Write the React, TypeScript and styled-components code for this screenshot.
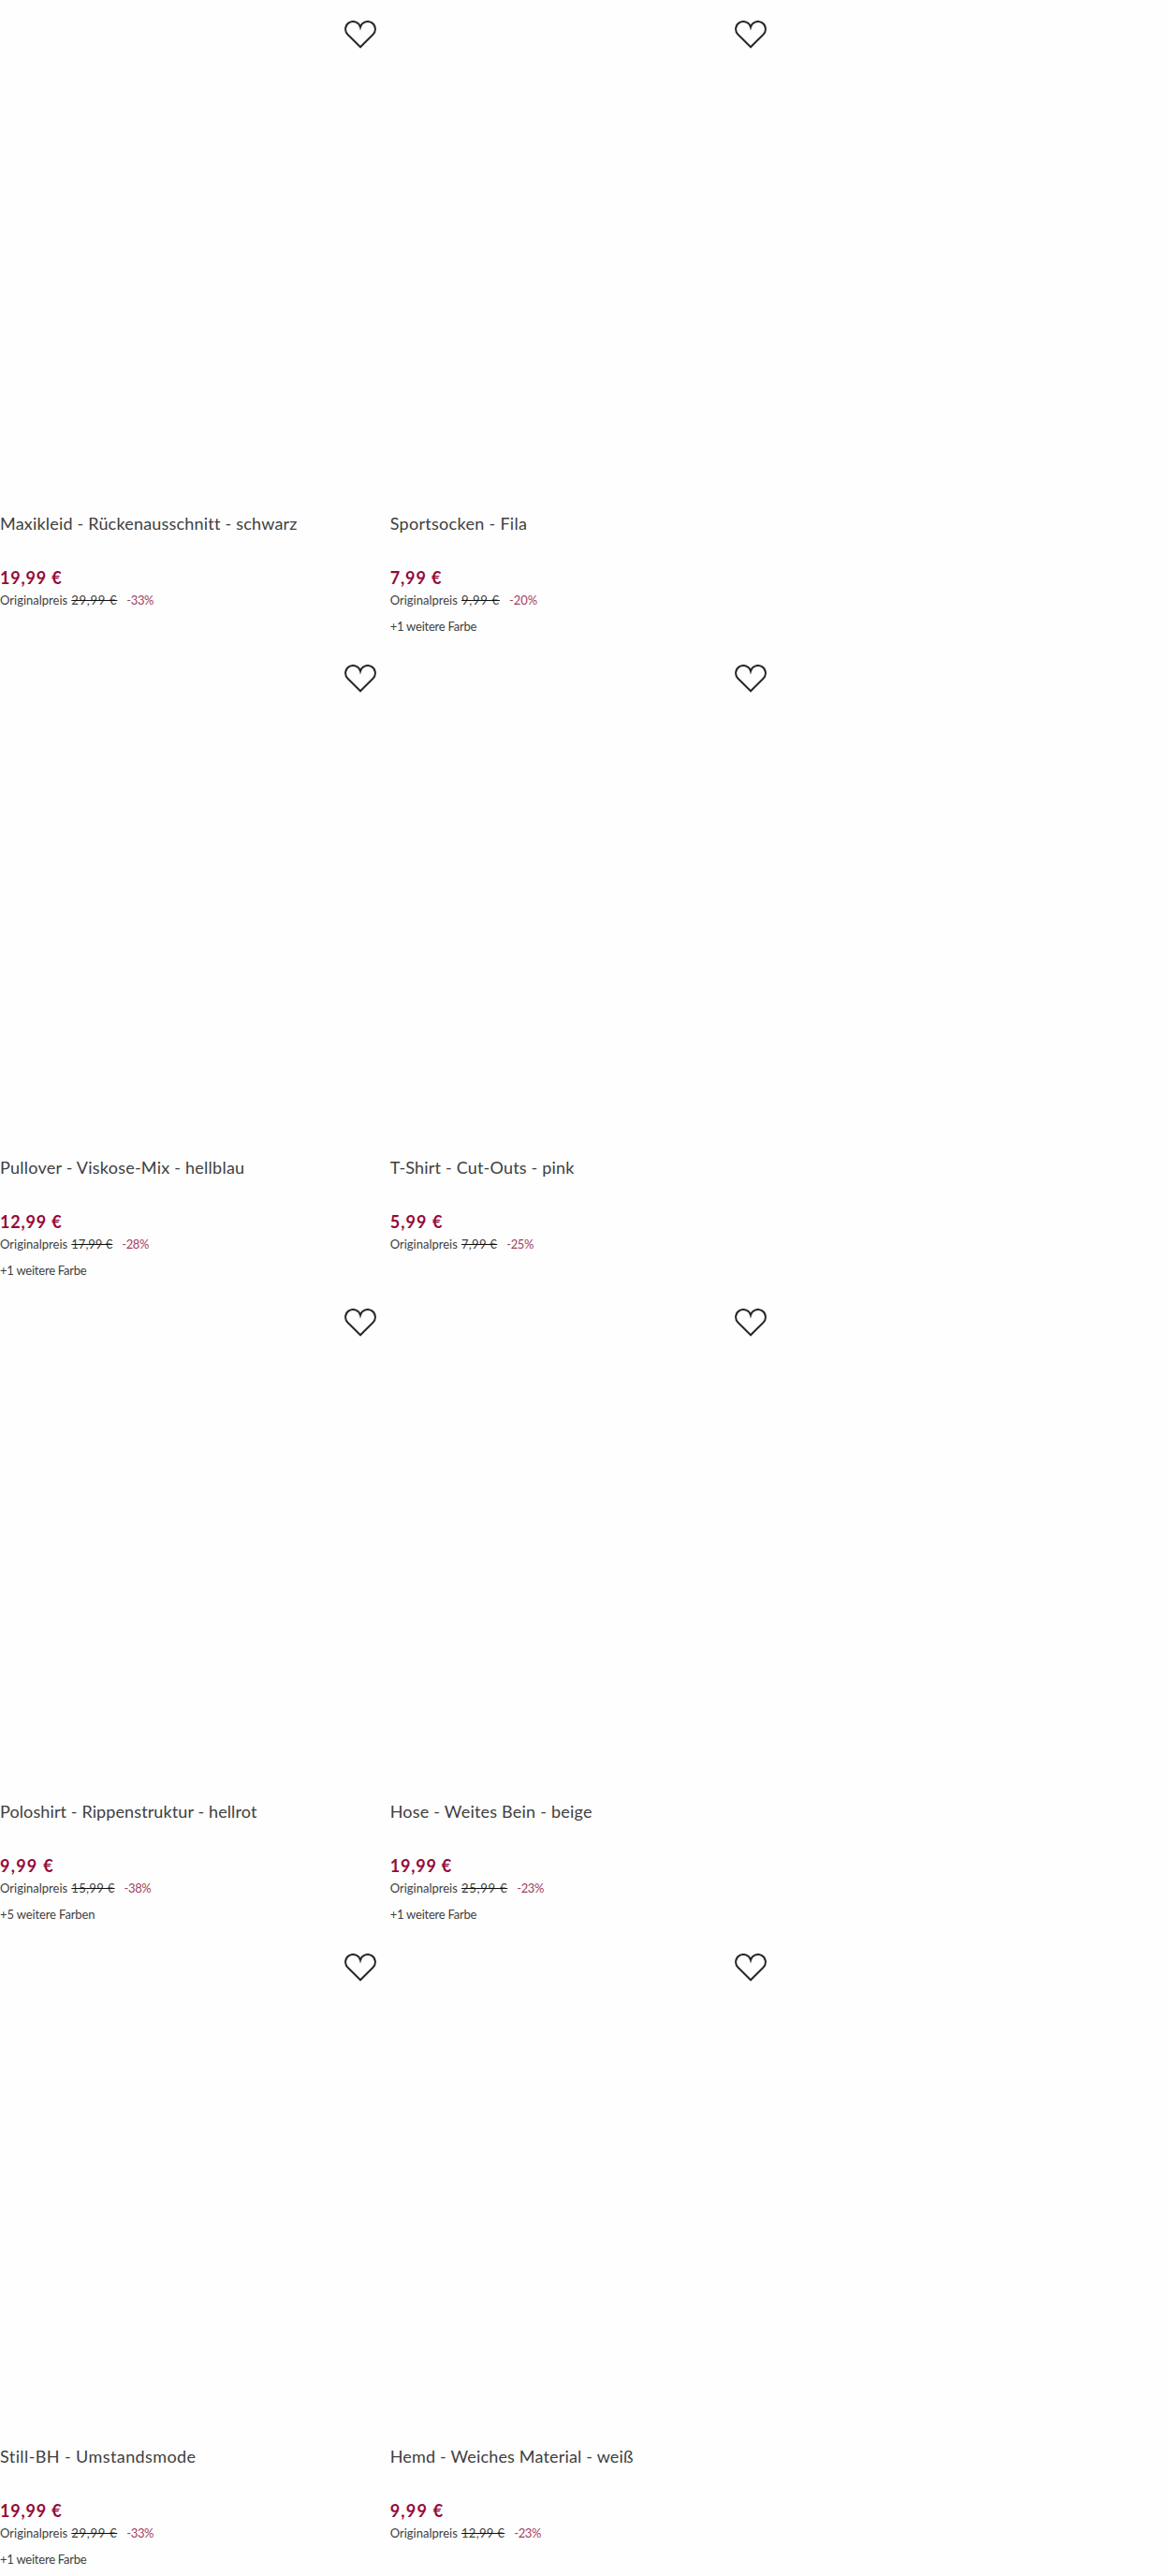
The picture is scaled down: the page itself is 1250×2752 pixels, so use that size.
import React from "react";
import styled, { createGlobalStyle } from "styled-components";

const GlobalStyle = createGlobalStyle`
  body {
    margin: 0;
    background: #fefefe;
    color: #404040;
    font-family: Lato, sans-serif;
  }
`;
const Grid = styled.div`
  display: grid;
  grid-template-columns: repeat(3, 1fr);
  grid-auto-rows: 688.2px;
  height: 2752px;
  overflow: hidden;
`;
const Card = styled.article<{ $first?: boolean }>`
  grid-column: ${(p) => (p.$first ? 1 : 2)};
  padding-right: 14.3px;
`;
const Photo = styled.div`
  position: relative;
  aspect-ratio: 3 / 4;
`;
const WishButton = styled.button`
  position: absolute;
  top: 22px;
  right: 0;
  padding: 0;
  border: 0;
  background: none;
  line-height: 0;
  cursor: pointer;
`;
const Title = styled.h3<{ $tracking: number }>`
  margin: 10.5px 0 34px;
  font-size: 18px;
  line-height: 24px;
  font-weight: 400;
  letter-spacing: ${(p) => p.$tracking}px;
  white-space: nowrap;
`;
const Price = styled.div<{ $tracking: number }>`
  font-size: 18px;
  line-height: 24px;
  font-weight: 700;
  color: #960a3a;
  letter-spacing: ${(p) => p.$tracking}px;
`;
const PriceInfo = styled.div`
  display: flex;
  margin-top: 3px;
  font-size: 13px;
  line-height: 18px;
`;
const Label = styled.span`
  width: 76.3px;
`;
const OldPrice = styled.span<{ $tracking: number }>`
  letter-spacing: ${(p) => p.$tracking}px;
  text-decoration: line-through;
  text-decoration-color: #111;
  text-decoration-thickness: 1.3px;
`;
const Discount = styled.span<{ $tracking: number }>`
  margin-left: 10px;
  color: #a3405f;
  letter-spacing: ${(p) => p.$tracking}px;
`;
const Colors = styled.div<{ $tracking: number }>`
  margin-top: 10px;
  font-size: 13px;
  line-height: 18px;
  letter-spacing: ${(p) => p.$tracking}px;
`;

// every text is [content, letter spacing in px]
type Text = [string, number];

interface Product {
  title: Text;
  price: Text;
  oldPrice: Text;
  discount: Text;
  colors?: Text;
}

const products: Product[] = [
  {
    title: ["Maxikleid - Rückenausschnitt - schwarz", 0.2],
    price: ["19,99 €", 0.8],
    oldPrice: ["29,99 €", 0.72],
    discount: ["-33%", -0.4],
  },
  {
    title: ["Sportsocken - Fila", 0.3],
    price: ["7,99 €", 0.9],
    oldPrice: ["9,99 €", 0.75],
    discount: ["-20%", 0],
    colors: ["+1 weitere Farbe", -0.23],
  },
  {
    title: ["Pullover - Viskose-Mix - hellblau", 0.24],
    price: ["12,99 €", 0.8],
    oldPrice: ["17,99 €", 0],
    discount: ["-28%", -0.4],
    colors: ["+1 weitere Farbe", -0.23],
  },
  {
    title: ["T-Shirt - Cut-Outs - pink", 0.19],
    price: ["5,99 €", 1.1],
    oldPrice: ["7,99 €", 0.3],
    discount: ["-25%", -0.4],
  },
  {
    title: ["Poloshirt - Rippenstruktur - hellrot", 0.11],
    price: ["9,99 €", 1.25],
    oldPrice: ["15,99 €", 0.33],
    discount: ["-38%", -0.4],
    colors: ["+5 weitere Farben", -0.12],
  },
  {
    title: ["Hose - Weites Bein - beige", 0.22],
    price: ["19,99 €", 0.8],
    oldPrice: ["25,99 €", 0.76],
    discount: ["-23%", -0.4],
    colors: ["+1 weitere Farbe", -0.23],
  },
  {
    title: ["Still-BH - Umstandsmode", 0.41],
    price: ["19,99 €", 0.8],
    oldPrice: ["29,99 €", 0.72],
    discount: ["-33%", -0.4],
    colors: ["+1 weitere Farbe", -0.23],
  },
  {
    title: ["Hemd - Weiches Material - weiß", 0.18],
    price: ["9,99 €", 1.25],
    oldPrice: ["12,99 €", 0.33],
    discount: ["-23%", -0.4],
  },
];

function Heart() {
  return (
    <svg width="34" height="30" viewBox="0 0 34 30" fill="none">
      <path
        d="M17 28.3 L3.6 15 A8.1 8.1 0 1 1 17 7 A8.1 8.1 0 1 1 30.4 15 Z"
        stroke="#2a2629"
        strokeWidth="2"
      />
    </svg>
  );
}

function ProductCard({ product, first }: { product: Product; first: boolean }) {
  const { title, price, oldPrice, discount, colors } = product;

  return (
    <Card $first={first}>
      <Photo>
        <WishButton>
          <Heart />
        </WishButton>
      </Photo>
      <Title $tracking={title[1]}>{title[0]}</Title>
      <Price $tracking={price[1]}>{price[0]}</Price>
      <PriceInfo>
        <Label>Originalpreis</Label>
        <OldPrice $tracking={oldPrice[1]}>{oldPrice[0]}</OldPrice>
        <Discount $tracking={discount[1]}>{discount[0]}</Discount>
      </PriceInfo>
      {colors && <Colors $tracking={colors[1]}>{colors[0]}</Colors>}
    </Card>
  );
}

function App() {
  return (
    <>
      <GlobalStyle />
      <Grid>
        {products.map((product, i) => (
          <ProductCard key={i} product={product} first={i % 2 === 0} />
        ))}
      </Grid>
    </>
  );
}

export default App;
